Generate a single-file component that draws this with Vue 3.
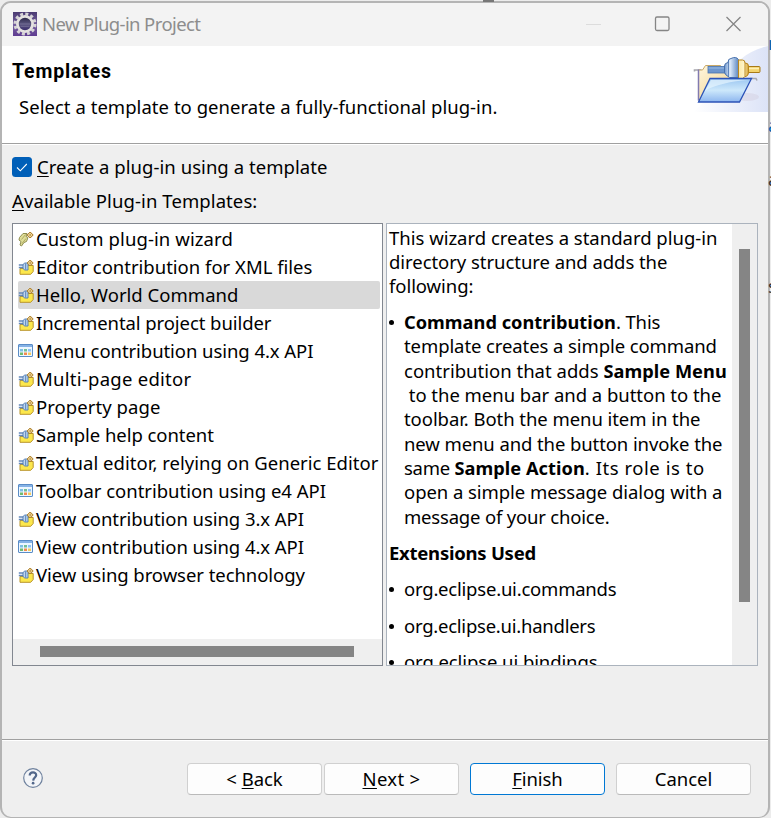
<script setup>
// Spreads the letters of a line so that it takes the given width.
const vFit = {
  mounted(el, { value }) {
    const extra = value - 0.6 - el.getBoundingClientRect().width
    el.style.letterSpacing = `${extra / el.textContent.length}px`
  },
}

const templates = [
  { label: 'Custom plug-in wizard', icon: 'wand', width: 197.5 },
  { label: 'Editor contribution for XML files', icon: 'plug', width: 277 },
  { label: 'Hello, World Command', icon: 'plug', width: 203, selected: true },
  { label: 'Incremental project builder', icon: 'plug', width: 236 },
  { label: 'Menu contribution using 4.x API', icon: 'grid', width: 278 },
  { label: 'Multi-page editor', icon: 'plug', width: 156 },
  { label: 'Property page', icon: 'plug', width: 125 },
  { label: 'Sample help content', icon: 'plug', width: 178.5 },
  { label: 'Textual editor, relying on Generic Editor', icon: 'plug', width: 343 },
  { label: 'Toolbar contribution using e4 API', icon: 'grid', width: 290.5 },
  { label: 'View contribution using 3.x API', icon: 'plug', width: 268.5 },
  { label: 'View contribution using 4.x API', icon: 'grid', width: 268.5 },
  { label: 'View using browser technology', icon: 'plug', width: 269.5 },
]

const intro = [
  { text: 'This wizard creates a standard plug-in', width: 329 },
  { text: 'directory structure and adds the', width: 279 },
  { text: 'following:', width: 85 },
]

// Each run of a line has its own width.
const details = [
  [{ text: 'Command contribution', width: 212.5, bold: true }, { text: '. This', width: 45 }],
  [{ text: 'template creates a simple command', width: 313.5 }],
  [{ text: 'contribution that adds ', width: 200 }, { text: 'Sample Menu', width: 124, bold: true }],
  [{ text: ' to the menu bar and a button to the', width: 318 }],
  [{ text: 'toolbar. Both the menu item in the', width: 297 }],
  [{ text: 'new menu and the button invoke the', width: 319 }],
  [{ text: 'same ', width: 51 }, { text: 'Sample Action', width: 131, bold: true }, { text: '. Its role is to', width: 120.5 }],
  [{ text: 'open a simple message dialog with a', width: 319 }],
  [{ text: 'message of your choice.', width: 206 }],
]

const extensions = [
  { name: 'org.eclipse.ui.commands', width: 213 },
  { name: 'org.eclipse.ui.handlers', width: 192 },
  { name: 'org.eclipse.ui.bindings', width: 194 },
]
</script>

<template>
  <div class="desktop">
    <span class="behind top-mark"></span>
    <span class="behind b1">n</span>
    <span class="behind b2">a</span>
    <span class="behind b3 dark">a</span>
    <span class="behind b4 dark">s</span>

    <div class="window">
      <header class="titlebar">
        <svg class="app-icon" viewBox="0 0 24 24">
          <defs>
            <linearGradient id="sky" x1="0" y1="0" x2="0" y2="1">
              <stop offset="0" stop-color="#4b3b72" />
              <stop offset=".55" stop-color="#75609f" />
              <stop offset="1" stop-color="#5f3b91" />
            </linearGradient>
            <linearGradient id="moon" x1="0" y1="0" x2="0" y2="1">
              <stop offset="0" stop-color="#24203f" />
              <stop offset=".5" stop-color="#5b5680" />
              <stop offset="1" stop-color="#35266a" />
            </linearGradient>
          </defs>
          <rect width="24" height="24" fill="url(#sky)" />
          <circle cx="12" cy="12" r="10" fill="none" stroke="#d6d4d6" stroke-width="3" stroke-dasharray="3 2.236" />
          <circle cx="12" cy="12" r="7.6" fill="url(#moon)" stroke="#e4e2e0" stroke-width="2.8" />
          <path d="M7 12h10M7.500 14.300h9" stroke="#7f7a9d" stroke-width=".7" />
        </svg>
        <span class="title"><span v-fit="159">New Plug-in Project</span></span>
        <svg class="controls" viewBox="0 0 214 44">
          <path d="M32 22.500h15" stroke="#dcdcdc" fill="none" />
          <rect x="101.500" y="15" width="13.500" height="13.500" rx="1.500" stroke="#858585" stroke-width="1.3" fill="none" />
          <path d="M172.500 15l14 14M186.500 15l-14 14" stroke="#858585" stroke-width="1.3" fill="none" />
        </svg>
      </header>

      <section class="banner">
        <div>
          <h1><span v-fit="100.500">Templates</span></h1>
          <p><span v-fit="479">Select a template to generate a fully-functional plug-in.</span></p>
        </div>
        <svg class="banner-art" viewBox="0 0 75 66">
          <defs>
            <linearGradient id="glow" x1="0" y1="0" x2="1" y2="0">
              <stop offset="0" stop-color="#fff" />
              <stop offset="1" stop-color="#dce3f7" />
            </linearGradient>
            <linearGradient id="front" x1="0" y1="0" x2="0" y2="1">
              <stop offset="0" stop-color="#9bc6f1" />
              <stop offset=".5" stop-color="#cde8fb" />
              <stop offset="1" stop-color="#8db6ef" />
            </linearGradient>
            <linearGradient id="back" x1="0" y1="0" x2="1" y2="1">
              <stop offset="0" stop-color="#fff7df" />
              <stop offset="1" stop-color="#f0cd82" />
            </linearGradient>
            <linearGradient id="steel" x1="0" y1="0" x2="1" y2="0">
              <stop offset="0" stop-color="#6e96cc" />
              <stop offset=".4" stop-color="#dceafa" />
              <stop offset="1" stop-color="#5d87c1" />
            </linearGradient>
            <linearGradient id="gold" x1="0" y1="0" x2="1" y2="0">
              <stop offset="0" stop-color="#fbe9a8" />
              <stop offset=".5" stop-color="#fff4c7" />
              <stop offset="1" stop-color="#d2a02d" />
            </linearGradient>
          </defs>
          <path d="M0 66C22 50 36 8 75 0V66Z" fill="url(#glow)" />
          <ellipse cx="54" cy="51" rx="12" ry="4" fill="#cbbfd2" opacity=".3" />
          <path d="M1.500 25.500V24H8.500M57 32.500h6l1 2" stroke="#a7a7ad" stroke-width="1.600" fill="none" />
          <path d="M5.500 54V24H9.500l3-4.500h15l3 4h15v10L10.500 52Z" fill="url(#back)" stroke="#c9a866" />
          <path d="M5.500 23.500v31" stroke="#817ab0" stroke-width="1.500" />
          <rect x="15" y="20.500" width="17" height="6.500" fill="#6d96cd" stroke="#4872ad" stroke-width=".8" />
          <path d="M15.500 22h16" stroke="#9abce5" />
          <rect x="55" y="20.500" width="12" height="6" rx="1" fill="#f3d36b" stroke="#a87a16" />
          <path d="M56 22.500h10" stroke="#fff0b3" stroke-width="1.500" />
          <path d="M31.500 20q0-3 3.500-3.500 0-4 3-4 5-2.500 7.500 1v18H36.500q-5-3-5-5Z" fill="url(#steel)" stroke="#4871ad" />
          <path d="M35.500 15v16" stroke="#4871ad" stroke-width=".8" />
          <path d="M45.500 14h4q2.500 0 2.500 3 3.500 0 3.500 3v7q0 3-4 4l-2 1.500h-4Z" fill="url(#gold)" stroke="#b8861f" />
          <path d="M52 17v13" stroke="#bd8c24" stroke-width=".8" />
          <path d="M17 32.500h41.500L46.500 56H5.500Z" fill="url(#front)" stroke="#2c53b7" stroke-width="1.300" />
          <path d="M18 34h37C40 35 20 39 12 45Z" fill="#e9f7ff" opacity=".65" />
        </svg>
      </section>

      <main class="body">
        <label class="check">
          <svg class="box" viewBox="0 0 20 20">
            <rect width="20" height="20" rx="3.500" fill="#005fb8" />
            <path d="M5 10.500l3.300 3.300 6.500-6.800" stroke="#fff" stroke-width="1.1" fill="none" />
          </svg>
          <span v-fit="291"><u>C</u>reate a plug-in using a template</span>
        </label>
        <div class="caption"><span v-fit="246"><u>A</u>vailable Plug-in Templates:</span></div>

        <div class="panes">
          <div class="list">
            <ul>
              <li v-for="t in templates" :key="t.label" :class="{ selected: t.selected }">
                <svg v-if="t.icon === 'wand'" class="icon" viewBox="0 0 16 16">
                  <path d="M1.500 6.500L5 2.500h4L8 5.500l2 1-1.500 4-2.500 1-2.500 3.500-1.500-1 1-3.500-2-1.500Z" fill="#dfdd98" stroke="#8f8e50" />
                  <path d="M7.500 3.500L3.500 8.500M8 7.500l-4 5" stroke="#aeac62" />
                  <path d="M12.200 1l3 3-3 3-3-3Z" fill="#fff4c8" stroke="#a36d13" />
                  <path d="M12.200 2.500v3M10.700 4h3" stroke="#b3852c" stroke-width=".8" />
                </svg>
                <svg v-else-if="t.icon === 'plug'" class="icon" viewBox="0 0 16 16">
                  <path d="M2 9.500h5L10 6.500h5.200v6L12.700 15.300H2Z" fill="#fce74c" stroke="#b9942b" />
                  <path d="M.8 6h5M.8 8.500h5" stroke="#6388ba" stroke-width="1.300" />
                  <path d="M5 5.500l1.800-1.500H10V11H6.800L5 9.500Z" fill="#bdd6f0" stroke="#4d78b0" stroke-width=".9" />
                  <path d="M7.700 4.500v6" stroke="#4d78b0" stroke-width=".9" />
                  <path d="M12.200 1l3 3-3 3-3-3Z" fill="#fff2c4" stroke="#a8771e" />
                  <path d="M12.200 2.200v3.600M10.400 4h3.600" stroke="#b78831" stroke-width=".8" />
                </svg>
                <svg v-else class="icon" viewBox="0 0 16 16">
                  <rect x=".5" y="1.500" width="14" height="12" rx=".5" fill="#edf7ff" stroke="#5a8cc6" />
                  <path d="M1 3h13" stroke="#86b2e6" stroke-width="2" />
                  <path d="M2 6h3v2.500H2Z" fill="#7fbfe6" />
                  <path d="M6 6h3v2.500H6Z" fill="#72c097" />
                  <path d="M10 6h3v2.500h-3Z" fill="#8fc3f6" />
                  <path d="M2 9.500h3V12H2Z" fill="#6fbb6f" />
                  <path d="M6 9.500h3V12H6Z" fill="#f28c50" />
                  <path d="M10 9.500h3V12h-3Z" fill="#f6cc5c" />
                </svg>
                <span v-fit="t.width">{{ t.label }}</span>
              </li>
            </ul>
            <div class="hscroll"><div class="thumb"></div></div>
          </div>

          <div class="description">
            <div class="text">
              <div class="intro">
                <div v-for="line in intro" :key="line.text" class="line"><span v-fit="line.width">{{ line.text }}</span></div>
              </div>
              <div class="item">
                <i class="dot"></i>
                <div>
                  <div v-for="(line, i) in details" :key="i" class="line"><span v-for="run in line" :key="run.text" v-fit="run.width" :class="{ bold: run.bold }">{{ run.text }}</span></div>
                </div>
              </div>
              <div class="line heading"><b v-fit="147.500">Extensions Used</b></div>
              <div v-for="e in extensions" :key="e.name" class="item">
                <i class="dot"></i>
                <div class="line"><span v-fit="e.width">{{ e.name }}</span></div>
              </div>
            </div>
            <div class="vscroll"><div class="thumb"></div></div>
          </div>
        </div>
      </main>

      <footer class="footer">
        <svg class="help" viewBox="0 0 20 20">
          <circle cx="10" cy="10" r="9.300" fill="#f3f5f8" stroke="#6f829e" stroke-width="1.200" />
          <path d="M6.700 7.600C6.700 3.300 13.300 3.400 13.200 7.100 13.100 9.500 10.300 9.600 10.200 12.600" fill="none" stroke="#53688b" stroke-width="2.200" />
          <circle cx="10.100" cy="15.200" r="1.350" fill="#53688b" />
        </svg>
        <div class="buttons">
          <button><span v-fit="57">&lt; <u>B</u>ack</span></button>
          <button><span v-fit="58.500"><u>N</u>ext &gt;</span></button>
          <button class="primary"><span v-fit="51"><u>F</u>inish</span></button>
          <button><span v-fit="58">Cancel</span></button>
        </div>
      </footer>
    </div>
  </div>
</template>

<style>
body {
  margin: 0;
  overflow: hidden;
}
</style>

<style scoped>
* {
  box-sizing: border-box;
}
.desktop {
  position: relative;
  width: 771px;
  height: 818px;
  background: #ececec;
  overflow: hidden;
  font: 18.5px/28px "Noto Sans", "Open Sans", sans-serif;
  color: #000;
}
span,
b {
  white-space: pre;
}
.bold {
  font-weight: bold;
  font-size: 18.2px;
}
u {
  text-decoration-thickness: 1px;
  text-underline-offset: 2px;
}
.window {
  position: relative;
  display: flex;
  flex-direction: column;
  width: 770px;
  height: 817px;
  margin-top: 1px;
  border: 2px solid #b4b4b4;
  border-bottom-width: 1px;
  border-radius: 11px;
  background: #efefef;
  overflow: hidden;
}
.behind {
  position: absolute;
  z-index: 2;
  left: 768px;
  width: 3px;
  overflow: hidden;
  line-height: 20px;
  color: #0864ad;
}
.behind.dark {
  color: #333;
}
.top-mark {
  left: 483px;
  top: 0;
  width: 11px;
  height: 2px;
  background: #777;
}
.b1 { top: 33px; }
.b2 { top: 115px; }
.b3 { top: 169px; }
.b4 { top: 276px; }

.titlebar {
  display: flex;
  align-items: center;
  flex: none;
  height: 43px;
  padding: 0 0 2px 11px;
  background: #f3f3f3;
}
.app-icon {
  width: 24px;
  height: 24px;
  margin-right: 5px;
}
.title {
  flex: 1;
  color: #8d8d8d;
}
.controls {
  width: 214px;
  height: 44px;
  flex: none;
}
.banner {
  display: flex;
  justify-content: space-between;
  flex: none;
  height: 98px;
  padding: 0 0 0 10px;
  background: #fff;
  border-bottom: 1px solid #a0a0a0;
}
h1 {
  margin: 12px 0 0;
  font: bold 19.5px/28px Roboto, sans-serif;
}
.banner p {
  margin: 7px 0 0 7px;
}
.banner-art {
  width: 75px;
  height: 66px;
  flex: none;
}
.body {
  flex: 1;
  padding: 8px 10px 0;
  border-top: 1px solid #fff;
}
.check {
  display: flex;
  align-items: center;
  height: 28px;
}
.box {
  width: 20px;
  height: 20px;
  margin-right: 5px;
}
.caption {
  height: 28px;
  margin-top: 6px;
}
.panes {
  display: flex;
  gap: 3px;
  height: 443px;
  margin-top: 8px;
}
.list {
  display: flex;
  flex-direction: column;
  flex: none;
  width: 371px;
  border: 1px solid #828790;
  background: #fff;
}
ul {
  flex: 1;
  margin: 0;
  padding: 1px 2px 0 5px;
  list-style: none;
}
li {
  display: flex;
  align-items: center;
  height: 28px;
  border-radius: 2px;
}
li.selected {
  background: #d9d9d9;
}
.icon {
  flex: none;
  width: 16px;
  height: 16px;
  margin-right: 2px;
}
.hscroll {
  height: 26px;
  padding: 7px 28px 0 27px;
  background: #efefef;
}
.thumb {
  background: #858585;
}
.hscroll .thumb {
  height: 11px;
}
.description {
  display: flex;
  flex: none;
  width: 372px;
  border: 1px solid #abb3bd;
  background: #fff;
  overflow: hidden;
}
.text {
  flex: 1;
  padding: 2px 0 0 2px;
}
.line {
  height: 24.35px;
  line-height: 24.35px;
  white-space: nowrap;
}
.intro .line {
  height: 24px;
  line-height: 24px;
}
.item {
  display: flex;
  margin-top: 12px;
}
.dot {
  flex: none;
  width: 5px;
  height: 5px;
  margin: 10px 10px 0 0;
  border-radius: 50%;
  background: #000;
}
.heading {
  margin-top: 12px;
}
.vscroll {
  width: 25px;
  padding: 25px 7px 0;
  background: #efefef;
}
.vscroll .thumb {
  height: 353px;
}
.footer {
  display: flex;
  align-items: center;
  justify-content: space-between;
  flex: none;
  height: 78px;
  padding: 0 17px 0 21px;
  border-top: 1px solid #a0a0a0;
  box-shadow: inset 0 1px #fff;
}
.help {
  width: 20px;
  height: 20px;
  margin-bottom: 2px;
}
.buttons {
  display: flex;
  gap: 11px;
}
button {
  width: 135px;
  height: 32px;
  padding: 0;
  border: 1px solid #d0d0d0;
  border-bottom-color: #bababa;
  border-radius: 4px;
  background: #fdfdfd;
  font: inherit;
  line-height: 28px;
  color: inherit;
}
button:first-child {
  margin-right: -9px;
}
button.primary {
  border-color: #0078d4;
}
</style>
